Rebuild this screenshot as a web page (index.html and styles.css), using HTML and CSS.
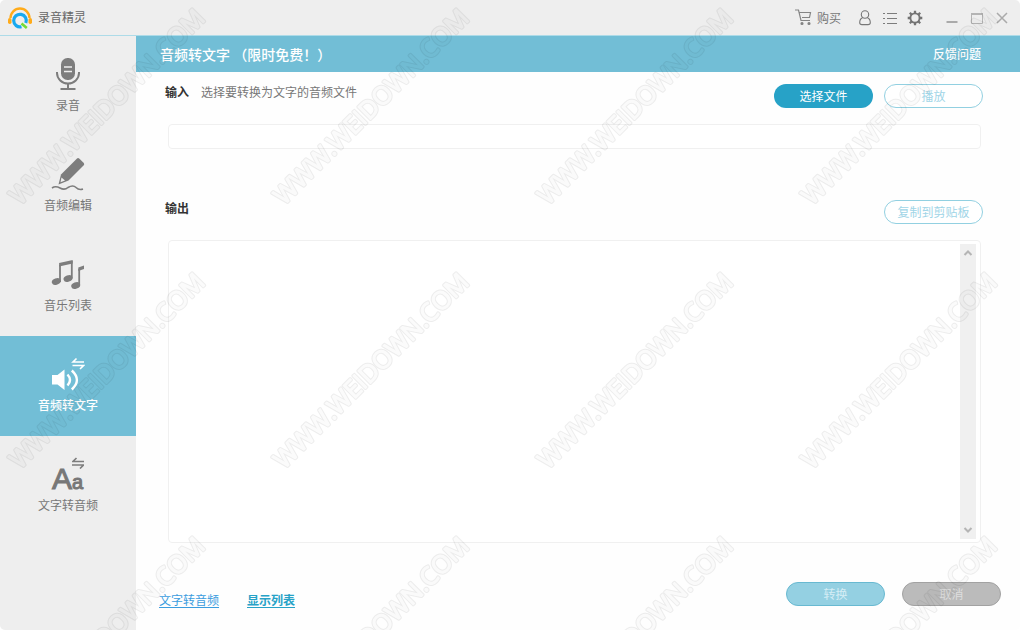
FILE: index.html
```html
<!DOCTYPE html>
<html lang="zh-CN">
<head>
<meta charset="utf-8">
<title>录音精灵</title>
<link rel="stylesheet" href="styles.css">
</head>
<body>
<div class="window">
  <header class="titlebar">
    <svg class="logo" viewBox="0 0 24 24" width="24" height="24" aria-hidden="true">
      <path d="M2.500 12A9.500 9.500 0 0 1 21.500 12" fill="none" stroke="#ffab1a" stroke-width="2.400"/>
      <rect x="0" y="12" width="3.500" height="6" rx="1.700" fill="#ffab1a"/>
      <rect x="20.500" y="12" width="3.500" height="6" rx="1.700" fill="#ffab1a"/>
      <path d="M13.500 20.700A6.300 6.300 0 1 1 17.800 17" fill="none" stroke="#18a9ef" stroke-width="3.200"/>
      <path d="M13.500 17.500 18.800 22" fill="none" stroke="#74dc35" stroke-width="2.600"/>
    </svg>
    <h1 class="app-name">录音精灵</h1>
    <button class="buy" type="button">
      <svg viewBox="0 0 17 17" width="17" height="17" fill="none" stroke="#858585" stroke-width="1.200" aria-hidden="true">
        <path d="M0 1H3.500L6 11.500H15M4.500 3.500H15.500L14.500 8.500H7"/>
        <circle cx="7" cy="14.500" r="1" fill="#777"/><circle cx="14" cy="14.500" r="1" fill="#777"/>
      </svg>
      <span>购买</span>
    </button>
    <button class="tool" type="button" aria-label="用户">
      <svg viewBox="0 0 16 16" width="16" height="16" fill="none" stroke="#777" stroke-width="1.100"><circle cx="8" cy="4.500" r="3.700"/><path d="M5.800 7.500C3.500 8.500 2.700 10.500 2.700 12.500 2.700 14 3.500 14.600 5 14.600H11C12.500 14.600 13.300 14 13.300 12.500 13.300 10.500 12.500 8.500 10.200 7.500"/></svg>
    </button>
    <button class="tool" type="button" aria-label="列表">
      <svg viewBox="0 0 16 16" width="16" height="16" stroke="#7c7c7c" stroke-width="1"><path d="M1 3.500H3M5 3.500H15M1 8.500H3M5 8.500H15M1 13.500H3M5 13.500H15"/></svg>
    </button>
    <button class="tool" type="button" aria-label="设置">
      <svg viewBox="0 0 16 16" width="16" height="16" fill="none" stroke="#737373"><circle cx="8" cy="8" r="4.600" stroke-width="1.900"/><path d="M8 .7V3M8 13V15.300M.7 8H3M13 8H15.300M2.800 2.800 4.500 4.500M11.500 11.500 13.200 13.200M13.200 2.800 11.500 4.500M4.500 11.500 2.800 13.200" stroke-width="2.300"/></svg>
    </button>
    <div class="window-controls">
      <button class="tool" type="button" aria-label="最小化"><svg viewBox="0 0 12 12" width="12" height="12"><path d="M.5 10H11.500" stroke="#aaa" stroke-width="2"/></svg></button>
      <button class="tool" type="button" aria-label="最大化"><svg viewBox="0 0 12 12" width="12" height="12" fill="none" stroke="#b4b4b4"><path d="M.5 1.500H11.500V11.500H.5Z"/><path d="M0 2H12" stroke-width="2"/></svg></button>
      <button class="tool" type="button" aria-label="关闭"><svg viewBox="0 0 12 12" width="12" height="12"><path d="M1 1 11 11M11 1 1 11" stroke="#aaa" stroke-width="1.500"/></svg></button>
    </div>
  </header>
  <div class="body">
    <nav class="sidebar">
      <button class="nav-item" type="button">
        <svg viewBox="0 0 34 34" width="34" height="34" aria-hidden="true"><rect x="10" y="1" width="14" height="22" rx="6.500" fill="#7d7d7d"/><path d="M13 10H21M13 14.500H21" stroke="#eee" stroke-width="1.500"/><path d="M6 15V16A11 10.500 0 0 0 28 16V15" fill="none" stroke="#7d7d7d" stroke-width="2"/><path d="M17 27V32M9.500 32H24.500" stroke="#7d7d7d" stroke-width="2"/></svg>
        <span>录音</span>
      </button>
      <button class="nav-item" type="button">
        <svg viewBox="0 0 34 34" width="34" height="34" aria-hidden="true"><path d="M26 1.500Q27 .5 28.200 1.500L32.800 6Q33.800 7.200 32.500 8.500L17.500 23.500 7.500 27.500 10 17.500Z" fill="#7d7d7d"/><path d="M10.500 20.500 14 23.500 9.500 25.300Z" fill="#eee"/><path d="M1 31Q4.500 28.500 9 31T17 30.500Q22 27.500 25 30.500T32 32" fill="none" stroke="#7d7d7d" stroke-width="1.600"/></svg>
        <span>音频编辑</span>
      </button>
      <button class="nav-item" type="button">
        <svg viewBox="0 0 34 34" width="34" height="34" fill="#7d7d7d" aria-hidden="true"><path d="M9 25V8M20.800 21.500V4" fill="none" stroke="#7d7d7d" stroke-width="1.800"/><path d="M8.100 6 21.700 3V6.500L8.100 9.500Z"/><ellipse cx="5.300" cy="24.500" rx="4.600" ry="3.200" transform="rotate(-20 5.300 24.500)"/><ellipse cx="17" cy="21.500" rx="4.600" ry="3.200" transform="rotate(-20 17 21.500)"/><path d="M28.200 28V12" fill="none" stroke="#7d7d7d" stroke-width="1.800"/><path d="M27.300 10.500 33 8.500V12L27.300 14Z"/><ellipse cx="24.700" cy="28.500" rx="4.600" ry="3.200" transform="rotate(-20 24.700 28.500)"/></svg>
        <span>音乐列表</span>
      </button>
      <button class="nav-item nav-item-active" type="button" aria-current="page">
        <svg viewBox="0 0 34 34" width="34" height="34" fill="none" stroke="#fff" aria-hidden="true"><path d="M1 18H6.500L13.500 12.500V33L6.500 27.500H1Z" fill="#fff" stroke="none"/><path d="M16.500 17.500Q21.500 23 16.500 28.500M20.800 13.500Q31 23 20.800 32.500" stroke-width="2.400"/><path d="M33 5H22L25.500 1.500M21.500 8.500H32.500L29 12" stroke-width="1.600"/></svg>
        <span>音频转文字</span>
      </button>
      <button class="nav-item" type="button">
        <span class="letters" aria-hidden="true"><span class="letter-big">A</span><span class="letter-small">a</span><svg class="swap" viewBox="0 0 12 12" width="12" height="12" fill="none" stroke="#7d7d7d" stroke-width="1.600"><path d="M12 4.500H1L4.500 1M0 8H11.500L8 11.500"/></svg></span>
        <span>文字转音频</span>
      </button>
    </nav>
    <main class="main">
      <div class="banner"><h2 class="banner-title">音频转文字 （限时免费！）</h2><a class="feedback" href="#">反馈问题</a></div>
      <div class="content">
        <section class="section">
          <div class="row">
            <label class="section-title" for="source">输入</label>
            <span class="hint">选择要转换为文字的音频文件</span>
            <button class="pill pill-primary" type="button">选择文件</button>
            <button class="pill pill-outline" type="button">播放</button>
          </div>
          <input class="file-path" id="source" type="text" readonly>
        </section>
        <section class="section section-output">
          <div class="row">
            <label class="section-title" for="result">输出</label>
            <button class="pill pill-outline pill-end" type="button">复制到剪贴板</button>
          </div>
          <div class="output">
            <textarea class="output-text" id="result" readonly></textarea>
            <div class="scrollbar">
              <button class="tool" type="button" aria-label="向上"><svg viewBox="0 0 10 10" width="10" height="10"><path d="M1.500 7 5 3.500 8.500 7" fill="none" stroke="#b5b5b5" stroke-width="2"/></svg></button>
              <button class="tool" type="button" aria-label="向下"><svg viewBox="0 0 10 10" width="10" height="10"><path d="M1.500 3 5 6.500 8.500 3" fill="none" stroke="#b5b5b5" stroke-width="2"/></svg></button>
            </div>
          </div>
        </section>
      </div>
      <footer class="footer">
        <a class="link" href="#">文字转音频</a>
        <a class="link link-strong" href="#">显示列表</a>
        <button class="pill pill-convert" type="button">转换</button>
        <button class="pill pill-cancel" type="button">取消</button>
      </footer>
    </main>
  </div>
</div>
<svg class="watermark" aria-hidden="true">
  <defs>
    <text id="mark" transform="translate(20 206) rotate(-45)">WWW.WEIDOWN.COM</text>
    <g id="marks">
      <use href="#mark"/><use href="#mark" x="264"/><use href="#mark" x="528"/><use href="#mark" x="792"/>
      <use href="#mark" y="264"/><use href="#mark" x="264" y="264"/><use href="#mark" x="528" y="264"/><use href="#mark" x="792" y="264"/>
      <use href="#mark" y="528"/><use href="#mark" x="264" y="528"/><use href="#mark" x="528" y="528"/><use href="#mark" x="792" y="528"/>
    </g>
    <mask id="outline" maskUnits="userSpaceOnUse" x="0" y="0" width="100%" height="100%">
      <use class="mark-edge" href="#marks"/>
      <use class="mark-core" href="#marks"/>
    </mask>
  </defs>
  <rect class="mark-tint" width="100%" height="100%" mask="url(#outline)"/>
</svg>
</body>
</html>
```
FILE: styles.css
```css
* { box-sizing: border-box; }
body {
  margin: 0;
  background: #fff;
  color: #777;
  font: 12px/16px "Noto Sans CJK SC", sans-serif;
}
button { padding: 0; border: 0; background: none; color: inherit; font: inherit; cursor: pointer; }
svg { display: block; }
.window {
  display: flex;
  flex-direction: column;
  min-height: 100vh;
  border-radius: 5px;
  overflow: hidden;
  background: #fefefe;
}
.titlebar {
  display: flex;
  align-items: center;
  height: 36px;
  padding: 0 12px 0 8px;
  background: #eee;
  border-bottom: 1px solid #addbe8;
}
.app-name { margin: 0 auto 2px 6px; font-size: 12px; font-weight: 400; color: #666; }
.buy { display: flex; align-items: center; gap: 5px; margin-right: 16px; }
.tool { display: grid; place-items: center; }
.titlebar > .tool { margin-right: 9px; }
.window-controls { display: flex; gap: 13px; margin-left: 14px; }
.body { display: flex; flex: 1; }
.sidebar { width: 136px; flex: none; background: #eee; }
.nav-item {
  display: flex;
  flex-direction: column;
  align-items: center;
  gap: 6px;
  width: 100%;
  height: 100px;
  padding-top: 21px;
}
.nav-item-active { background: #72bed6; color: #fff; font-weight: 500; }
.letters {
  position: relative;
  display: flex;
  align-items: baseline;
  width: 34px;
  height: 34px;
  padding: 8px 0 0 1px;
  font-family: "Liberation Sans", sans-serif;
  line-height: 28px;
  -webkit-text-stroke: 1px #777;
}
.letter-big { font-size: 30px; }
.letter-small { font-size: 20px; }
.swap { position: absolute; top: 0; right: 1px; }
.main { display: flex; flex-direction: column; flex: 1; min-width: 0; }
.banner {
  display: flex;
  align-items: center;
  justify-content: space-between;
  height: 36px;
  padding: 0 39px 0 24px;
  background: #72bed6;
  color: #fff;
}
.banner-title { margin: 0; font-size: 14px; font-weight: 500; }
.feedback { color: #fff; font-weight: 500; text-decoration: none; }
.content { display: flex; flex-direction: column; flex: 1; padding: 12px 39px 0 32px; }
.section { display: flex; flex-direction: column; }
.section-output { flex: 1; margin-top: 51px; }
.row { display: flex; margin: 0 -2px 0 -3px; }
.section-title { color: #333; font-weight: 700; }
.hint { margin: 0 auto 0 12px; }
.pill {
  width: 99px;
  height: 24px;
  padding-bottom: 1px;
  border: 1px solid transparent;
  border-radius: 12px;
}
.pill-primary { margin-right: 11px; background: #27a2c7; color: #fff; }
.pill-outline { background: #fff; border-color: #92d0e1; color: #9fd5e7; }
.pill-end { margin-left: auto; }
.pill-convert { margin: 0 17px 0 auto; background: #94d0e2; border-color: #68b9d1; color: #d4edf5; }
.pill-cancel { background: #bbb; border-color: #a2a2a2; color: #dedede; }
.file-path {
  height: 25px;
  margin-top: 16px;
  padding: 0 8px;
  border: 1px solid #f0f0f0;
  border-radius: 4px;
  background: #fff;
  font: inherit;
}
.output {
  display: flex;
  flex: 1;
  margin-top: 16px;
  padding: 3px 4px;
  border: 1px solid #f0f0f0;
  border-radius: 4px;
  background: #fff;
}
.output-text { flex: 1; min-width: 0; border: 0; resize: none; background: none; font: inherit; }
.scrollbar {
  display: flex;
  flex-direction: column;
  justify-content: space-between;
  align-items: center;
  width: 16px;
  padding: 4px 0;
  background: #f0f0f0;
}
.footer { display: flex; align-items: center; padding: 37px 19px 22px 23px; }
.link { margin: 12px 28px 0 0; color: #3b9ddf; text-underline-offset: 2px; }
.link-strong { color: #27a2c7; font-weight: 700; }
.watermark {
  position: absolute;
  inset: 0;
  width: 100%;
  height: 100%;
  pointer-events: none;
  font: 25px "Open Sans", sans-serif;
  stroke-linejoin: round;
}
.mark-edge { fill: #fff; stroke: #fff; stroke-width: 3px; }
.mark-core { fill: #333; stroke: #333; stroke-width: 1px; }
.mark-tint { fill: rgba(0, 0, 0, 0.07); }
```
